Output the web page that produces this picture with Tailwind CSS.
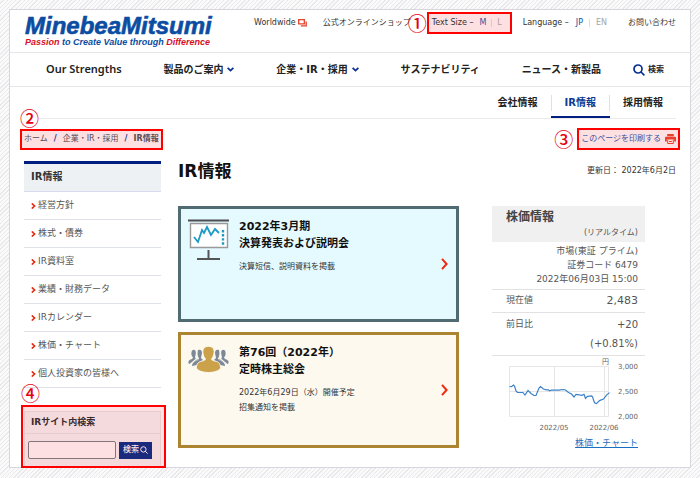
<!DOCTYPE html>
<html lang="ja">
<head>
<meta charset="utf-8">
<meta name="viewport" content="width=device-width, initial-scale=1">
<title>IR情報 | MinebeaMitsumi</title>
<script src="https://cdn.jsdelivr.net/npm/@tailwindcss/browser@4"></script>
</head>
<body class="min-h-screen bg-[repeating-linear-gradient(135deg,#fafafa_0px,#fafafa_2px,#e9e9eb_2px,#e9e9eb_3px)] px-[9px] pt-[9px] pb-[11px] font-['DejaVu_Sans','Noto_Sans_CJK_JP',sans-serif] text-[#333]">
<div class="border border-[#d6d6dc] bg-white">

  <header>
    <div class="flex h-[43px] items-start border-b border-[#e4e6ea] pr-[14px] pl-[15px]">
      <a href="#" class="mt-1 block font-['Liberation_Sans',sans-serif] font-bold whitespace-nowrap italic">
        <span class="block text-[24px] leading-[24px] text-[#0b4da2] [-webkit-text-stroke:0.6px_#0b4da2]">MinebeaMitsumi</span>
        <span class="block text-[9px] leading-[8px] text-[#0b4da2]"><span class="text-[#d7102a]">Passion</span> to Create Value through <span class="text-[#d7102a]">Difference</span></span>
      </a>
      <div class="mt-[2px] ml-auto flex h-[22px] items-center text-[8px] whitespace-nowrap">
        <a href="#" class="flex items-center gap-[2px]">Worldwide
          <svg class="h-2 w-[9px]" viewBox="0 0 9 8" fill="none" stroke="#e8402a" stroke-width="1.3"><path d="M.7.7h5.6v4.2H.7zM2.8 6.9h5.4V2.6"/></svg>
        </a>
        <a href="#" class="ml-4">公式オンラインショップ</a>
        <span class="-ml-[3px] font-['Noto_Sans_CJK_JP'] text-[19px] leading-[22px] font-medium text-[#e60012]">①</span>
        <div class="flex h-[22px] w-[85px] items-center border-2 border-[#ff0000] bg-[#fde0e2] pl-[3px]">
          <span>Text Size –</span>
          <button type="button" class="ml-[6px] text-[#3a4f9b]">M</button>
          <span class="mx-[5px] h-2 w-px bg-[#e3c4c8]"></span>
          <button type="button" class="text-[#b39a9e]">L</button>
        </div>
        <div class="ml-[11px] flex items-center">
          <span>Language –</span>
          <a href="#" class="ml-[7px] text-[#0b4da2]">JP</a>
          <span class="mx-[6px] h-2 w-px bg-[#ddd]"></span>
          <a href="#" class="text-[#a5a5a5]">EN</a>
        </div>
        <a href="#" class="ml-[21px]">お問い合わせ</a>
      </div>
    </div>

    <nav aria-label="メイン" class="flex h-[34px] items-center justify-between border-b border-[#e4e6ea] pr-[26px] pl-9 text-[10px] font-bold whitespace-nowrap text-[#222]">
      <a href="#" class="font-['Noto_Sans'] text-[11px] font-semibold">Our Strengths</a>
      <a href="#" class="flex items-center gap-1">製品のご案内
        <svg class="h-[5px] w-[7px]" viewBox="0 0 7 5" fill="none" stroke="#0a2f92" stroke-width="1.8"><path d="M.6.8 3.5 3.6 6.4.8"/></svg></a>
      <a href="#" class="flex items-center gap-1">企業・IR・採用
        <svg class="h-[5px] w-[7px]" viewBox="0 0 7 5" fill="none" stroke="#0a2f92" stroke-width="1.8"><path d="M.6.8 3.5 3.6 6.4.8"/></svg></a>
      <a href="#">サステナビリティ</a>
      <a href="#">ニュース・新製品</a>
      <button type="button" class="-ml-[10px] flex items-center gap-[3px] text-[8px] font-bold">
        <svg class="h-3 w-3" viewBox="0 0 12 12" fill="none" stroke="#0a2f92" stroke-width="1.7"><circle cx="5" cy="5" r="4"/><path d="m8 8 3.4 3.4"/></svg>検索
      </button>
    </nav>

    <nav aria-label="セクション" class="mx-[14px] flex h-8 justify-end border-b border-[#e8eaec] text-[10px] font-bold whitespace-nowrap text-[#222]">
      <a href="#" class="flex items-center px-[13px]">会社情報</a>
      <a href="#" aria-current="page" class="relative flex items-center border-b-2 border-[#001f80] px-[14px] pt-[2px] text-[#0b3a92] before:absolute before:top-[8px] before:left-0 before:h-4 before:w-px before:bg-[#e0e0e0] after:absolute after:top-[8px] after:right-0 after:h-4 after:w-px after:bg-[#e0e0e0]">IR情報</a>
      <a href="#" class="flex items-center px-[13px]">採用情報</a>
    </nav>
  </header>

  <div class="px-[14px]">
    <div class="-mx-1 flex items-center justify-between pt-[9px] text-[8px] whitespace-nowrap">
      <nav aria-label="パンくず" class="relative">
        <span class="absolute -top-[22px] left-0 bg-white font-['Noto_Sans_CJK_JP'] text-[19px] leading-[22px] font-medium text-[#e60012]">②</span>
        <ol class="flex h-[21px] items-center gap-[6px] border-2 border-[#ff0000] bg-[#fde0e2] px-[2px] text-[#5a4a50]">
          <li><a href="#">ホーム</a></li>
          <li class="font-bold text-[#1b2f8a]">/</li>
          <li><a href="#">企業・IR・採用</a></li>
          <li class="font-bold text-[#1b2f8a]">/</li>
          <li class="font-bold">IR情報</li>
        </ol>
      </nav>
      <div class="flex items-center gap-1">
        <span class="font-['Noto_Sans_CJK_JP'] text-[19px] leading-[22px] font-medium text-[#e60012]">③</span>
        <button type="button" class="flex h-[22px] items-center gap-1 border-2 border-[#ff0000] bg-[#fde0e2] px-[2px] text-[#3c50a0]">このページを印刷する
          <svg class="h-[10px] w-[11px]" viewBox="0 0 11 10"><path fill="#e8402a" d="M2.2 0h6.6v2.2H2.2zM1 2.8h9a1 1 0 0 1 1 1v3.6H9.2V5.4H1.8v2H0V3.8a1 1 0 0 1 1-1z"/><path fill="none" stroke="#e8402a" d="M2.7 5.8v3.7h5.6V5.8M4 7.5h3"/></svg>
        </button>
      </div>
    </div>

    <div class="flex items-start gap-[17px] pt-[11px]">
      <aside class="-mb-px w-[137px] shrink-0">
        <h2 class="h-[31px] border-t-3 border-b border-t-[#001f80] border-b-[#d9dcee] bg-[#eef1f3] pl-[7px] text-[10px] leading-[26px] font-semibold">IR情報</h2>
        <ul class="text-[9px] text-[#555] *:h-7 *:border-b *:border-[#dfe2e6] *:pl-[7px] *:leading-[27px]">
          <li><a href="#" class="flex items-center gap-[2px]"><svg class="h-[6px] w-[5px]" viewBox="0 0 5 6" fill="none" stroke="#e62a12" stroke-width="1.7"><path d="M.8.5 3.5 3 .8 5.500"/></svg>経営方針</a></li>
          <li><a href="#" class="flex items-center gap-[2px]"><svg class="h-[6px] w-[5px]" viewBox="0 0 5 6" fill="none" stroke="#e62a12" stroke-width="1.7"><path d="M.8.5 3.5 3 .8 5.500"/></svg>株式・債券</a></li>
          <li><a href="#" class="flex items-center gap-[2px]"><svg class="h-[6px] w-[5px]" viewBox="0 0 5 6" fill="none" stroke="#e62a12" stroke-width="1.7"><path d="M.8.5 3.5 3 .8 5.500"/></svg>IR資料室</a></li>
          <li><a href="#" class="flex items-center gap-[2px]"><svg class="h-[6px] w-[5px]" viewBox="0 0 5 6" fill="none" stroke="#e62a12" stroke-width="1.7"><path d="M.8.5 3.5 3 .8 5.500"/></svg>業績・財務データ</a></li>
          <li><a href="#" class="flex items-center gap-[2px]"><svg class="h-[6px] w-[5px]" viewBox="0 0 5 6" fill="none" stroke="#e62a12" stroke-width="1.7"><path d="M.8.5 3.5 3 .8 5.500"/></svg>IRカレンダー</a></li>
          <li><a href="#" class="flex items-center gap-[2px]"><svg class="h-[6px] w-[5px]" viewBox="0 0 5 6" fill="none" stroke="#e62a12" stroke-width="1.7"><path d="M.8.5 3.5 3 .8 5.500"/></svg>株価・チャート</a></li>
          <li><a href="#" class="flex items-center gap-[2px]"><svg class="h-[6px] w-[5px]" viewBox="0 0 5 6" fill="none" stroke="#e62a12" stroke-width="1.7"><path d="M.8.5 3.5 3 .8 5.500"/></svg>個人投資家の皆様へ</a></li>
        </ul>
        <form role="search" class="relative -mx-[3px] mt-[17px] -mr-[5px] border-2 border-[#ff0000] bg-[#fde0e2] pt-1 pr-[3px] pl-px">
          <span class="absolute -top-[25px] -left-[2px] font-['Noto_Sans_CJK_JP'] text-[19px] leading-[22px] font-medium text-[#e60012]">④</span>
          <div class="border border-b-0 border-[#e6cccf] bg-[#f4dadc]">
            <label for="q" class="block h-[22px] border-b border-[#e6cccf] pl-[6px] text-[9px] leading-[21px] font-bold text-[#3a2a30]">IRサイト内検索</label>
            <div class="flex items-center gap-[3px] pt-[7px] pr-2 pb-[7px] pl-[3px]">
              <input id="q" type="search" class="h-[18px] min-w-0 flex-1 rounded-[2px] border border-[#85757a] bg-[#fde0e2] px-1 text-[9px]">
              <button type="submit" class="flex h-[17px] w-[33px] shrink-0 items-center justify-center gap-px bg-[#1a2a7c] text-[8px] font-medium whitespace-nowrap text-[#fde0e2]">検索<svg class="h-2 w-2" viewBox="0 0 8 8" fill="none" stroke="currentColor"><circle cx="3.4" cy="3.4" r="2.7"/><path d="m5.3 5.3 2.3 2.3"/></svg></button>
            </div>
          </div>
        </form>
      </aside>

      <main class="min-w-0 flex-1">
        <div class="flex h-[45px] justify-between whitespace-nowrap">
          <h1 class="text-[17px] leading-[21px] font-bold text-[#111]">IR情報</h1>
          <p class="text-[8px] leading-[20px]">更新日： 2022年6月2日</p>
        </div>
        <div class="flex items-start gap-[33px] pr-[31px]">
          <div class="flex min-w-0 flex-1 flex-col gap-[10px]">
            <a href="#" class="flex h-[116px] border-3 border-[#506c72] bg-[#e5faff] pr-2 pl-[7px]">
              <svg class="mt-[10px] h-[42px] w-[41px] shrink-0" viewBox="0 0 41 42" fill="none"><path stroke="#4c4c50" stroke-width="2" d="M0 1.5h41"/><path fill="#fff" stroke="#999" stroke-width="1.4" d="M2.5 4.5h37v24h-37z"/><path stroke="#555" stroke-width="2" d="M20.5 31v8M9 40h23"/><path stroke="#1b9ac4" stroke-width="1.8" d="m6 18 4 5 4-12 2 3 3-6 4 8 4-6 4 4"/><path stroke="#1b9ac4" stroke-width="2.4" stroke-dasharray="2.4 1.7" d="M35 11v15"/></svg>
              <div class="mt-[9px] ml-[10px]">
                <h2 class="text-[11px] leading-[17px] font-bold text-[#111]">2022年3月期<br>決算発表および説明会</h2>
                <p class="mt-[7px] text-[8px] leading-[15px]">決算短信、説明資料を掲載</p>
              </div>
              <svg class="ml-auto h-3 w-[7px] self-center" viewBox="0 0 7 12" fill="none" stroke="#ee2a10" stroke-width="2"><path d="M1 .8 5.6 6 1 11.2"/></svg>
            </a>
            <a href="#" class="flex h-[116px] border-3 border-[#ac8532] bg-[#fdf9ef] pr-2 pl-[7px]">
              <svg class="mt-[11px] h-[28px] w-[41px] shrink-0" viewBox="0 0 41 28"><g fill="#7e8997"><path d="M4 4.5C6 3 8 4 8 7l-1 5 3 1.5-4 3-5 1.5C-.5 15 1 14 4 13l1-1.5C3 9 3 7 4 4.5z"/><path d="M10 4c2-1 4 0 4 3l-1 5 2 2-6 5-5 1c0-3 2-4 6-6l1-1.5C9.5 10 9 7 10 4z"/><path d="M37 4.500C35 3 33 4 33 7l1 5-3 1.500 4 3 5 1.500c1.500-3 0-4-3-5l-1-1.500C38 9 38 7 37 4.500z"/><path d="M31 4c-2-1-4 0-4 3l1 5-2 2 6 5 5 1c0-3-2-4-6-6l-1-1.500C31.500 10 32 7 31 4z"/></g><path fill="none" stroke="#fdf9ef" stroke-width="1.3" d="M8.500 3v10L2.500 18M32.500 3v10l6 5"/><path fill="#cba24a" stroke="#fdf9ef" stroke-width="1" d="M20.500.3c4.300 0 6 3 5.600 6.500-.3 2.800-1.400 4.800-2.500 6 .2 1.500.9 1.700 3.400 2.200 4 1 5.500 3 5.500 6.500 0 2.500-5 5-12 5s-12-2.500-12-5c0-3.500 1.500-5.500 5.500-6.500 2.500-.5 3.200-.7 3.400-2.200-1.100-1.200-2.200-3.200-2.500-6C14.500 3.300 16.200.3 20.500.3z"/></svg>
              <div class="mt-[9px] ml-[10px]">
                <h2 class="text-[11px] leading-[17px] font-bold text-[#111]">第76回（2022年）<br>定時株主総会</h2>
                <p class="mt-[7px] text-[8px] leading-[15px]">2022年6月29日（水）開催予定<br>招集通知を掲載</p>
              </div>
              <svg class="ml-auto h-3 w-[7px] self-center" viewBox="0 0 7 12" fill="none" stroke="#ee2a10" stroke-width="2"><path d="M1 .8 5.6 6 1 11.2"/></svg>
            </a>
          </div>

          <section class="w-[153px] shrink-0 text-[9px] whitespace-nowrap text-[#555]">
            <div class="h-9 bg-[#f0f0f0] pt-[3px] pr-[7px] pl-[14px]">
              <h2 class="text-[12px] leading-[16px] font-semibold text-[#444]">株価情報</h2>
              <p class="text-right text-[8px] leading-[16px]">(リアルタイム)</p>
            </div>
            <p class="border-b border-[#e2e2e2] pt-[2px] pr-[7px] pb-[3px] text-right leading-[14px]">市場(東証 プライム)<br>証券コード 6479<br>2022年06月03日 15:00</p>
            <dl>
              <div class="flex h-[23px] items-center justify-between border-b border-[#e2e2e2] pr-[7px] pl-[14px]"><dt>現在値</dt><dd class="text-[11px]">2,483</dd></div>
              <div class="flex h-[43px] justify-between border-b border-[#e2e2e2] pt-[2px] pr-[7px] pl-[14px] leading-[19px]"><dt>前日比</dt><dd class="text-right text-[10px]">+20<br>(+0.81%)</dd></div>
            </dl>
            <svg class="h-[76px] w-full font-['DejaVu_Sans','Noto_Sans_CJK_JP',sans-serif]" viewBox="0 0 153 76" fill="none" role="img" aria-label="株価チャート">
              <path stroke="#e6e6e6" d="M17.5 10.5h99v50h-99zM17.5 35.5h99M62.5 10.5v50M112.5 10.5v50"/>
              <path stroke="#3b82c8" stroke-width="1.2" d="m17.5 30.5 2 .2 2-1.700 1 1 1.500 5 1.500 1.500h5.500l2 2.500 3-4.500 3 3 3 2h2l3-7.500 1.500-1.500 3 2.500 3 .8h2l1 1 2-.6h7l5-.7 2 .5 3 2.500 3 1.500 2.500 3 2-2.500 6 .8 2-1 1.500 4 2-2 4-.5 1 1 2 6 2 .8 3-3 4-1.500 3-4 3-2.500"/>
              <g fill="#666" font-size="7"><text x="110" y="8">円</text><text x="146" y="13" text-anchor="end">3,000</text><text x="146" y="38" text-anchor="end">2,500</text><text x="146" y="63" text-anchor="end">2,000</text><text x="62" y="74" text-anchor="middle">2022/05</text><text x="112" y="74" text-anchor="middle">2022/06</text></g>
            </svg>
            <p class="mt-1 pr-[7px] text-right leading-[14px]"><a href="#" class="text-[#1a6fc0] underline">株価・チャート</a></p>
          </section>
        </div>
      </main>
    </div>
  </div>
</div>
</body>
</html>
